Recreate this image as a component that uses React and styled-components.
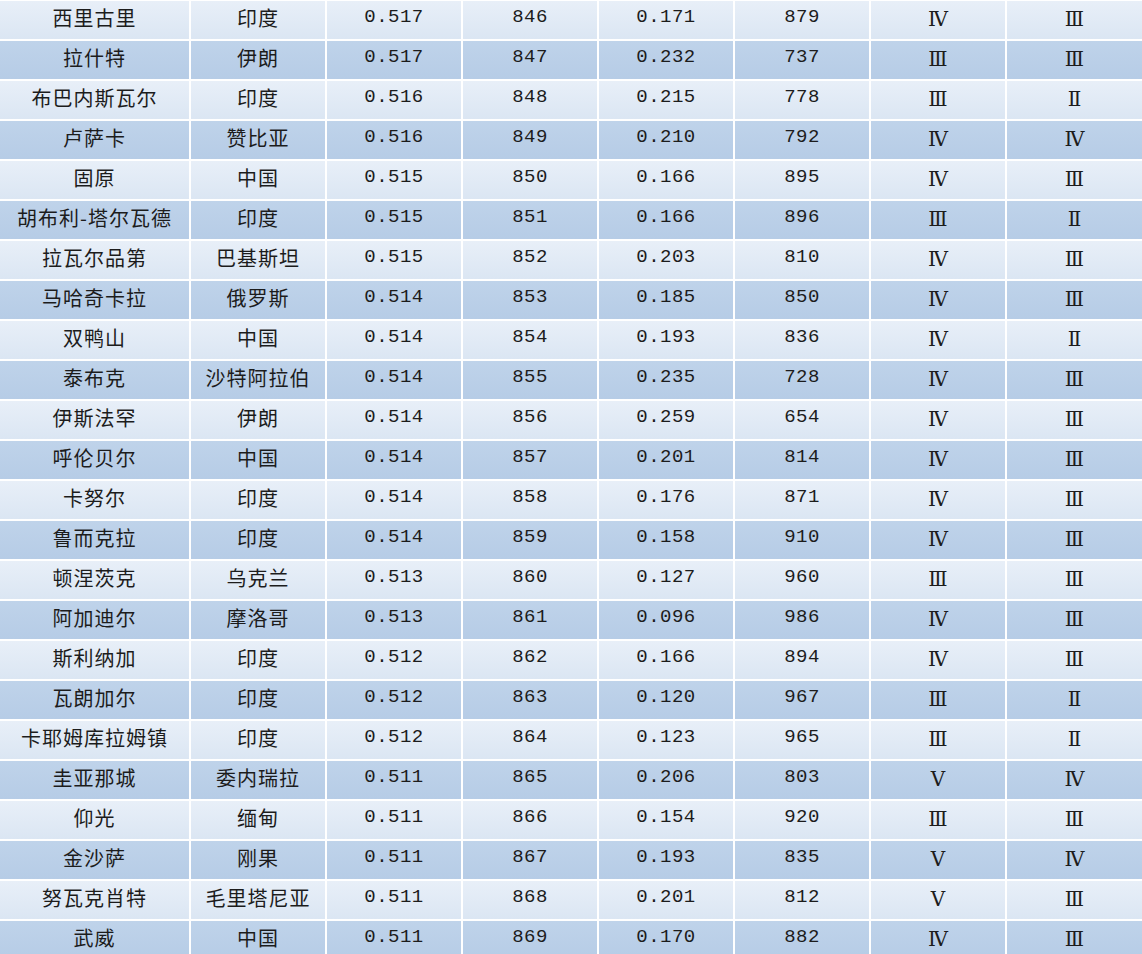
import styled, { createGlobalStyle } from 'styled-components';

const GlobalStyle = createGlobalStyle`
    html, body {
        margin: 0;
        padding: 0;
        background: #fff;
    }
`;

const rows = [
    ['西里古里', '印度', '0.517', '846', '0.171', '879', 'Ⅳ', 'Ⅲ'],
    ['拉什特', '伊朗', '0.517', '847', '0.232', '737', 'Ⅲ', 'Ⅲ'],
    ['布巴内斯瓦尔', '印度', '0.516', '848', '0.215', '778', 'Ⅲ', 'Ⅱ'],
    ['卢萨卡', '赞比亚', '0.516', '849', '0.210', '792', 'Ⅳ', 'Ⅳ'],
    ['固原', '中国', '0.515', '850', '0.166', '895', 'Ⅳ', 'Ⅲ'],
    ['胡布利-塔尔瓦德', '印度', '0.515', '851', '0.166', '896', 'Ⅲ', 'Ⅱ'],
    ['拉瓦尔品第', '巴基斯坦', '0.515', '852', '0.203', '810', 'Ⅳ', 'Ⅲ'],
    ['马哈奇卡拉', '俄罗斯', '0.514', '853', '0.185', '850', 'Ⅳ', 'Ⅲ'],
    ['双鸭山', '中国', '0.514', '854', '0.193', '836', 'Ⅳ', 'Ⅱ'],
    ['泰布克', '沙特阿拉伯', '0.514', '855', '0.235', '728', 'Ⅳ', 'Ⅲ'],
    ['伊斯法罕', '伊朗', '0.514', '856', '0.259', '654', 'Ⅳ', 'Ⅲ'],
    ['呼伦贝尔', '中国', '0.514', '857', '0.201', '814', 'Ⅳ', 'Ⅲ'],
    ['卡努尔', '印度', '0.514', '858', '0.176', '871', 'Ⅳ', 'Ⅲ'],
    ['鲁而克拉', '印度', '0.514', '859', '0.158', '910', 'Ⅳ', 'Ⅲ'],
    ['顿涅茨克', '乌克兰', '0.513', '860', '0.127', '960', 'Ⅲ', 'Ⅲ'],
    ['阿加迪尔', '摩洛哥', '0.513', '861', '0.096', '986', 'Ⅳ', 'Ⅲ'],
    ['斯利纳加', '印度', '0.512', '862', '0.166', '894', 'Ⅳ', 'Ⅲ'],
    ['瓦朗加尔', '印度', '0.512', '863', '0.120', '967', 'Ⅲ', 'Ⅱ'],
    ['卡耶姆库拉姆镇', '印度', '0.512', '864', '0.123', '965', 'Ⅲ', 'Ⅱ'],
    ['圭亚那城', '委内瑞拉', '0.511', '865', '0.206', '803', 'Ⅴ', 'Ⅳ'],
    ['仰光', '缅甸', '0.511', '866', '0.154', '920', 'Ⅲ', 'Ⅲ'],
    ['金沙萨', '刚果', '0.511', '867', '0.193', '835', 'Ⅴ', 'Ⅳ'],
    ['努瓦克肖特', '毛里塔尼亚', '0.511', '868', '0.201', '812', 'Ⅴ', 'Ⅲ'],
    ['武威', '中国', '0.511', '869', '0.170', '882', 'Ⅳ', 'Ⅲ'],
];

// 每欄字型
const kinds = ['cjk', 'cjk', 'num', 'num', 'num', 'num', 'roman', 'roman'];

//
const Sheet = styled.div({
    display: 'grid',
    gridTemplateColumns: '189px repeat(6, 134px) 1fr',
    gridAutoRows: '38px',
    gap: '2px',
    paddingTop: '1px',
    width: '1142px',
    height: '954px',
    overflow: 'hidden',
    backgroundColor: '#fff',
});

//
const Cell = styled.div(({ $dark, $kind }) => ({
    display: 'flex',
    alignItems: 'center',
    justifyContent: 'center',
    paddingBottom: '6px',
    boxSizing: 'border-box',
    whiteSpace: 'nowrap',
    color: '#1c1c1c',
    background: $dark
        ? 'linear-gradient(180deg, #bfd3ea 0%, #b6cce6 100%)'
        : 'linear-gradient(180deg, #e8eff8 0%, #dbe6f3 100%)',
    ...($kind === 'cjk' && {
        fontFamily: '"Noto Sans CJK SC", sans-serif',
        fontSize: '20px',
        letterSpacing: '1px',
    }),
    ...($kind === 'num' && {
        fontFamily: '"Liberation Mono", monospace',
        fontSize: '19px',
        letterSpacing: '0.5px',
    }),
    ...($kind === 'roman' && {
        fontFamily: '"DejaVu Serif", "Liberation Serif", serif',
        fontSize: '20px',
        paddingBottom: '3px',
    }),
}));

//
const App = () => (

    <>
        <GlobalStyle />
        <Sheet>
            {
                rows.map((row, i) => row.map((val, j) => (
                    <Cell key={`${i}-${j}`} $dark={i % 2 === 1} $kind={kinds[j]}>
                        {val}
                    </Cell>
                )))
            }
        </Sheet>
    </>

);

export default App;
